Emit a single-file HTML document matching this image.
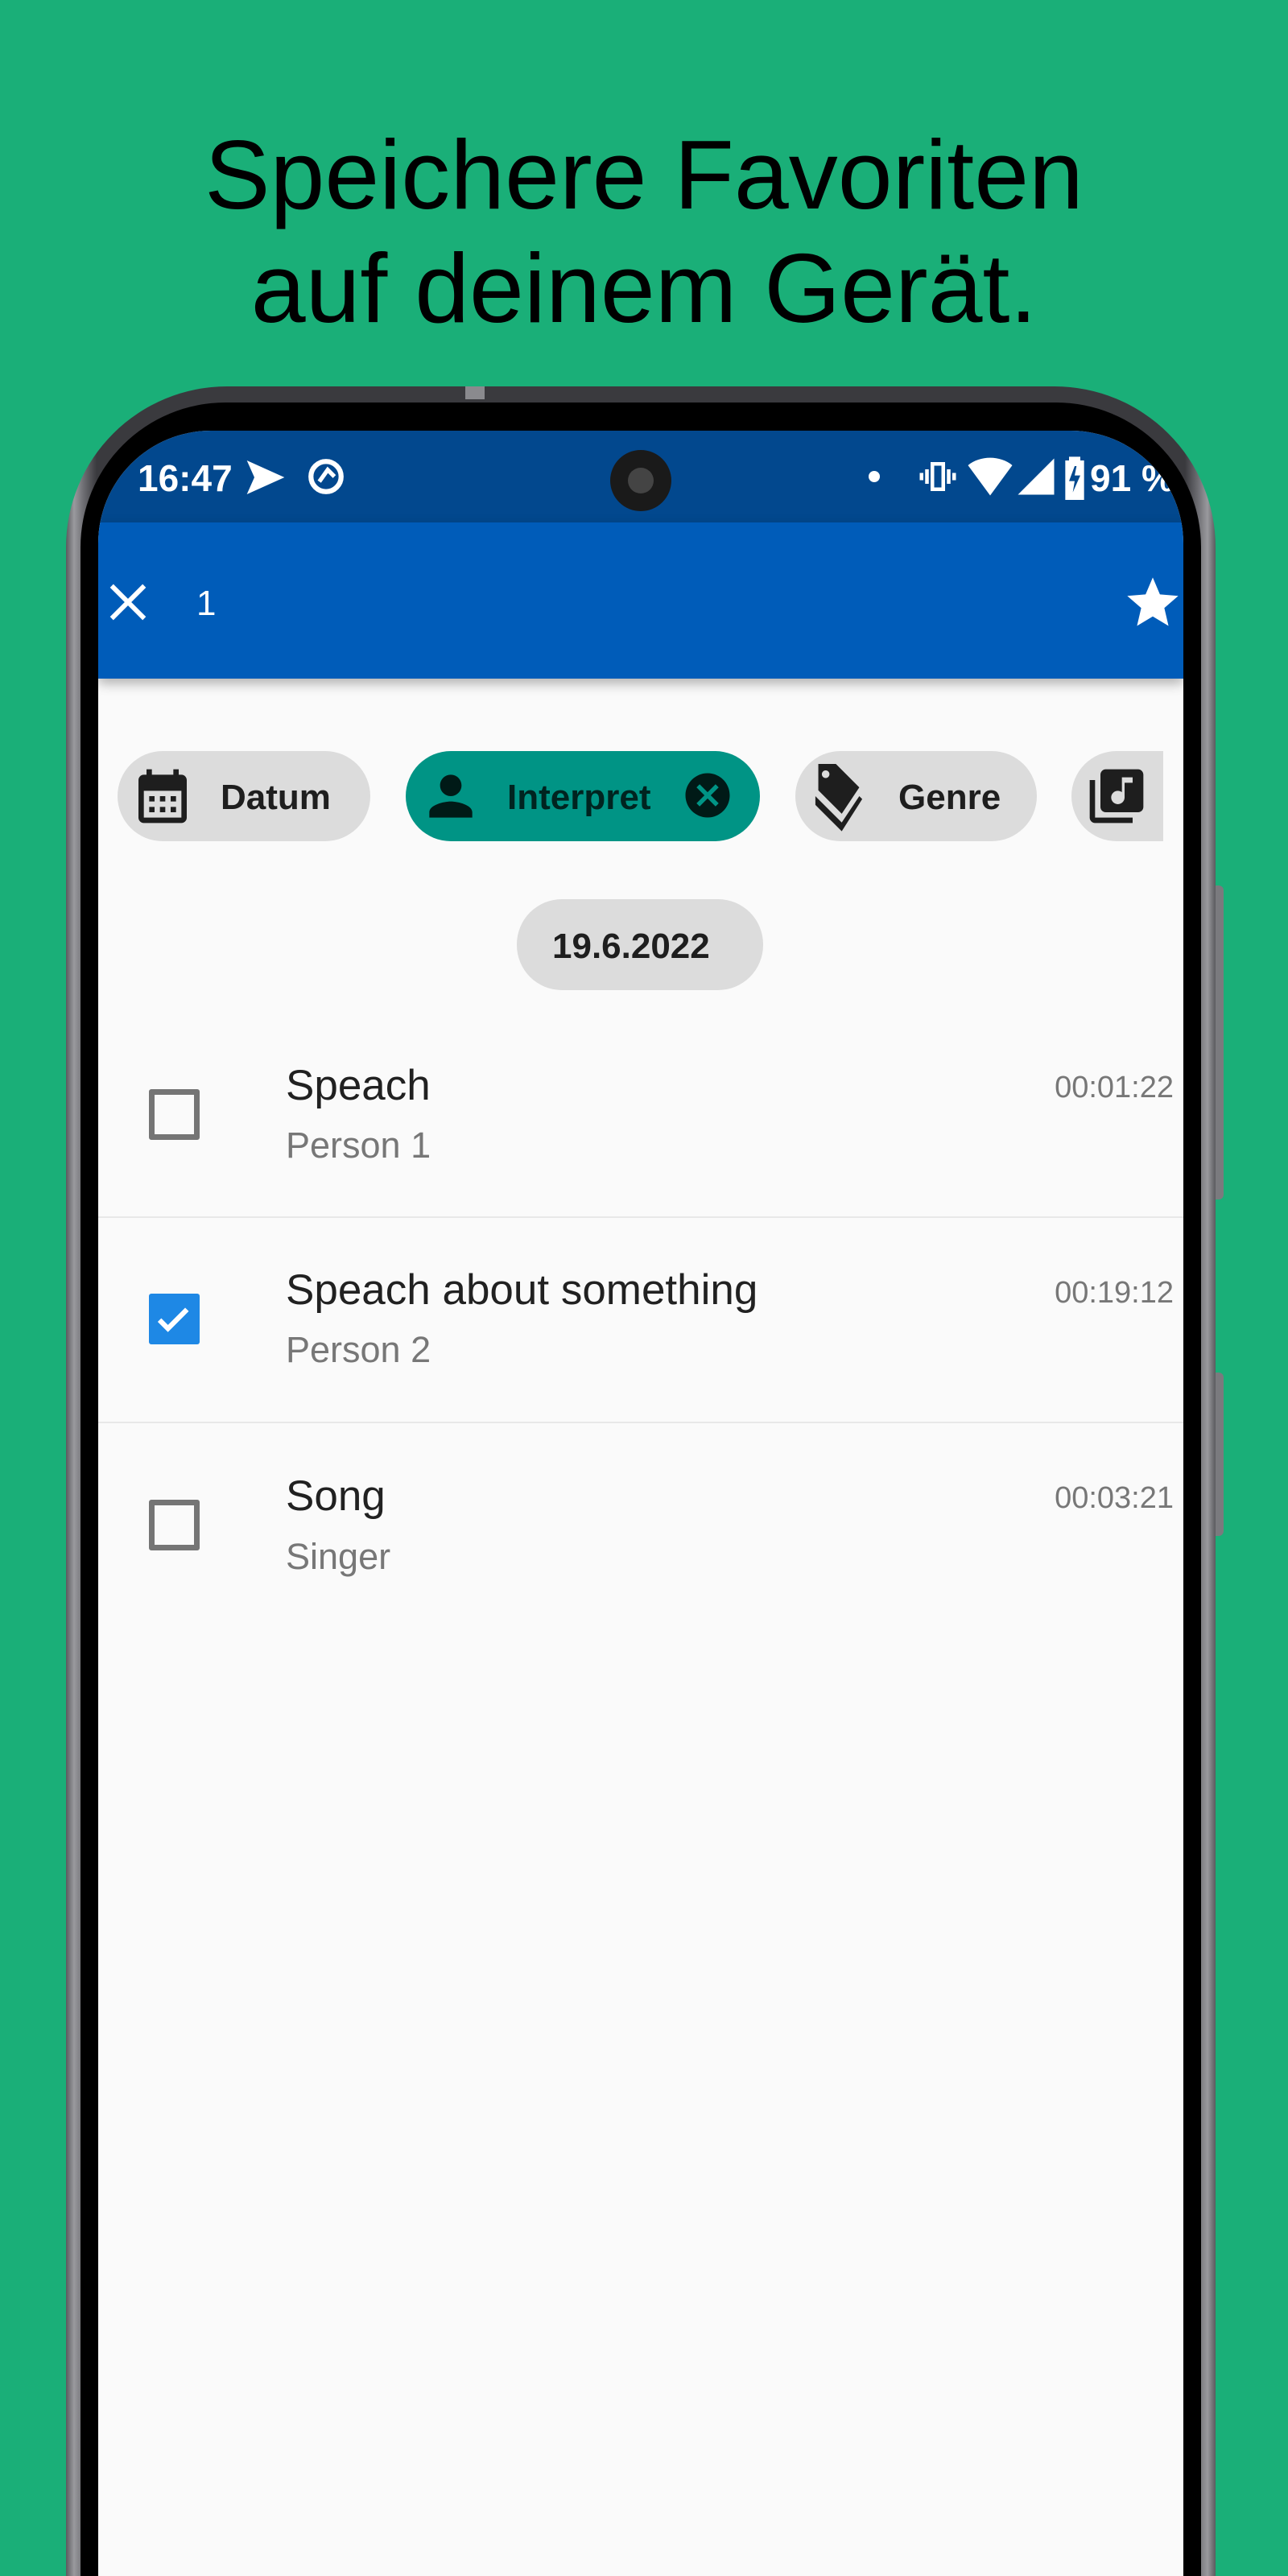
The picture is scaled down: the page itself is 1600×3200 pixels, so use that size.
<!DOCTYPE html>
<html><head><meta charset="utf-8"><style>
*{margin:0;padding:0;box-sizing:border-box}
html,body{width:1600px;height:3200px;overflow:hidden}
body{background:#1aaf78;position:relative;font-family:"Liberation Sans",Arial,sans-serif}
.h{position:absolute;left:0;width:1600px;text-align:center;font-size:122px;color:#000;line-height:1}
.frame{position:absolute;left:82px;top:480px;width:1428px;height:2720px;border-radius:200px 200px 0 0;background:linear-gradient(90deg,#5a5a5e 0,#9a9a9e 10px,#6d6d72 22px,#3a3a3e 38px,#3a3a3e 1390px,#6d6d72 1406px,#9a9a9e 1418px,#5a5a5e 1428px)}
.bezel{position:absolute;left:100px;top:500px;width:1392px;height:2700px;border-radius:180px 180px 0 0;background:#000}
.screen{position:absolute;left:122px;top:535px;width:1348px;height:2665px;border-radius:140px 140px 0 0;background:#fafafa;overflow:hidden}
.sb{position:absolute;left:0;top:0;width:100%;height:114px;background:#02488e}
.ab{position:absolute;left:0;top:114px;width:100%;height:194px;background:#005cb9;box-shadow:0 6px 14px rgba(0,0,0,.3)}
.w{color:#fff;position:absolute}
.chip{position:absolute;top:398px;height:112px;border-radius:56px;background:#dcdcdc;font-weight:bold;font-size:44px;color:#1e1e1e}
.chip span{position:absolute;top:33px}
.chip svg{position:absolute}
.t{position:absolute;left:233px;font-size:53px;color:#212121}
.s{position:absolute;left:233px;font-size:45px;color:#777}
.tm{position:absolute;right:12px;font-size:38px;color:#777}
.cb{position:absolute;left:63px;width:63px;height:63px;border:7px solid #757575;border-radius:3px}
.dv{position:absolute;left:0;width:100%;height:2px;background:#e8e8e8}
</style></head><body>
<div class="h" style="top:156px">Speichere Favoriten</div>
<div class="h" style="top:297px">auf deinem Gerät.</div>
<div style="position:absolute;left:1508px;top:1100px;width:12px;height:390px;background:#7a7a7e;border-radius:0 6px 6px 0"></div>
<div style="position:absolute;left:1508px;top:1705px;width:12px;height:203px;background:#7a7a7e;border-radius:0 6px 6px 0"></div>
<div class="frame"></div>
<div style="position:absolute;left:578px;top:480px;width:24px;height:16px;background:#8a8a8e"></div>
<div class="bezel"></div>
<div class="screen">
 <div class="sb">
  <div class="w" style="left:49px;top:32px;font-size:46px;font-weight:bold">16:47</div>
  <svg class="w" style="left:180px;top:30px" width="56" height="56" viewBox="0 0 24 24"><path fill="#fff" d="M2 3l20 9-20 9 4-9z"/></svg>
  <svg class="w" style="left:258px;top:32px" width="50" height="50" viewBox="0 0 24 24"><circle cx="12" cy="12" r="9" fill="none" stroke="#fff" stroke-width="3"/><path d="M8 15l5-7 4 4" fill="none" stroke="#fff" stroke-width="2.5"/></svg>
  <div style="position:absolute;left:636px;top:24px;width:76px;height:76px;border-radius:50%;background:#1a1a1a"><div style="position:absolute;left:22px;top:22px;width:32px;height:32px;border-radius:50%;background:#444"></div></div>
  <div style="position:absolute;left:957px;top:50px;width:14px;height:14px;border-radius:50%;background:#fff"></div>
  <svg class="w" style="left:1016px;top:30px" width="54" height="54" viewBox="0 0 24 24"><path fill="#fff" d="M8 4h8v16H8zM10 6v12h4V6zM5 8h2v8H5zM17 8h2v8h-2zM2 10h2v4H2zM20 10h2v4h-2z"/></svg>
  <svg class="w" style="left:1078px;top:28px" width="60" height="60" viewBox="0 0 24 24"><path fill="#fff" d="M1 6c6-5 16-5 22 0L12 21z"/></svg>
  <svg class="w" style="left:1138px;top:30px" width="54" height="54" viewBox="0 0 24 24"><path fill="#fff" d="M22 2v20H2z"/></svg>
  <svg class="w" style="left:1198px;top:30px" width="30" height="56" viewBox="0 0 12 24"><path fill="#fff" d="M3 1h6v2h2v21H1V3h2zM6 6l-3 8h3l-1 6 4-9H6l1-5z"/></svg>
  <div class="w" style="left:1232px;top:32px;font-size:46px;font-weight:bold">91 %</div>
 </div>
 <div class="ab">
  <svg class="w" style="left:10px;top:72px" width="54" height="54" viewBox="0 0 24 24"><path d="M3 3l18 18M21 3L3 21" stroke="#fff" stroke-width="2.6"/></svg>
  <div class="w" style="left:122px;top:76px;font-size:44px">1</div>
  <svg class="w" style="left:1272px;top:62px" width="76" height="76" viewBox="0 0 24 24"><path fill="#fff" d="M12 17.27L18.18 21l-1.64-7.03L22 9.24l-7.19-.61L12 2 9.19 8.63 2 9.24l5.46 4.73L5.82 21z"/></svg>
 </div>
 <div class="chip" style="left:24px;width:314px"><svg style="left:16px;top:16px" width="80" height="80" viewBox="0 0 24 24"><path fill="#1e1e1e" d="M19 4h-1V2h-2v2H8V2H6v2H5c-1.11 0-1.99.9-1.99 2L3 20c0 1.1.89 2 2 2h14c1.1 0 2-.9 2-2V6c0-1.1-.9-2-2-2zm0 16H5V10h14v10zM9 14H7v-2h2v2zm4 0h-2v-2h2v2zm4 0h-2v-2h2v2zm-8 4H7v-2h2v2zm4 0h-2v-2h2v2zm4 0h-2v-2h2v2z"/></svg><span style="left:128px">Datum</span></div>
 <div class="chip" style="left:382px;width:440px;background:#009485;color:#002420"><svg style="left:16px;top:16px" width="80" height="80" viewBox="0 0 24 24"><path fill="#001a17" d="M12 12c2.21 0 4-1.79 4-4s-1.79-4-4-4-4 1.79-4 4 1.79 4 4 4zm0 2c-2.67 0-8 1.34-8 4v2h16v-2c0-2.66-5.33-4-8-4z"/></svg><span style="left:126px">Interpret</span><svg style="left:342px;top:22px" width="66" height="66" viewBox="0 0 24 24"><path fill="#001a17" d="M12 2C6.47 2 2 6.47 2 12s4.47 10 10 10 10-4.47 10-10S17.53 2 12 2zm5 13.59L15.59 17 12 13.41 8.41 17 7 15.59 10.59 12 7 8.41 8.41 7 12 10.59 15.59 7 17 8.41 13.41 12 17 15.59z"/></svg></div>
 <div class="chip" style="left:866px;width:300px"><svg style="left:14px;top:12px" width="80" height="88" viewBox="0 0 22 24"><path fill="#1e1e1e" d="M4 1h6l8 8-6 9-8-8zM6.5 3.2a1.3 1.3 0 1 0 .01 0z M3 12l9 9 6-9 1 1-7 11-9-9z"/></svg><span style="left:128px">Genre</span></div>
 <div class="chip" style="left:1209px;border-radius:56px 0 0 56px;width:114px"><svg style="left:16px;top:16px" width="80" height="80" viewBox="0 0 24 24"><path fill="#1e1e1e" d="M20 2H8c-1.1 0-2 .9-2 2v12c0 1.1.9 2 2 2h12c1.1 0 2-.9 2-2V4c0-1.1-.9-2-2-2zm-2 5h-3v5.5c0 1.38-1.12 2.5-2.5 2.5S10 13.88 10 12.5s1.12-2.5 2.5-2.5c.57 0 1.08.19 1.5.51V5h4v2zM4 6H2v14c0 1.1.9 2 2 2h14v-2H4V6z"/></svg></div>
 <div class="chip" style="left:520px;top:582px;width:306px;height:113px"><span style="left:44px;top:34px">19.6.2022</span></div>

 <div class="cb" style="top:818px"></div>
 <div class="t" style="top:783px">Speach</div>
 <div class="s" style="top:862px">Person 1</div>
 <div class="tm" style="top:795px">00:01:22</div>
 <div class="dv" style="top:976px"></div>

 <div style="position:absolute;left:63px;top:1072px;width:63px;height:63px;background:#1e88e5;border-radius:3px"><svg width="63" height="63" viewBox="0 0 24 24"><path d="M5 12.5l4 4 9-9" fill="none" stroke="#fff" stroke-width="2.4"/></svg></div>
 <div class="t" style="top:1037px">Speach about something</div>
 <div class="s" style="top:1116px">Person 2</div>
 <div class="tm" style="top:1050px">00:19:12</div>
 <div class="dv" style="top:1231px"></div>

 <div class="cb" style="top:1328px"></div>
 <div class="t" style="top:1293px">Song</div>
 <div class="s" style="top:1373px">Singer</div>
 <div class="tm" style="top:1305px">00:03:21</div>
</div>
</body></html>
